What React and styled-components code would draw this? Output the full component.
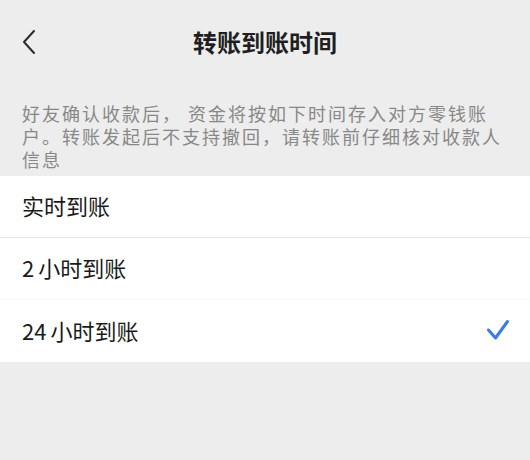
import React, { useState } from 'react';
import styled, { createGlobalStyle } from 'styled-components';

const GlobalStyle = createGlobalStyle`
    html, body {
        margin: 0;
        padding: 0;
        background-color: #ededed;
    }
    body {
        font-family: 'Noto Sans CJK SC', 'Noto Sans', sans-serif;
    }
`;

const Page = styled.div`
    width: 530px;
    min-height: 460px;
    background-color: #ededed;
`;
const Header = styled.div`
    position: relative;
    height: 86px;
    display: flex;
    align-items: center;
    justify-content: center;
    padding-bottom: 2px;
    box-sizing: border-box;
`;
const Back = styled.button`
    position: absolute;
    left: 14px;
    top: 26px;
    width: 30px;
    height: 32px;
    padding: 0;
    border: none;
    background: transparent;
    display: flex;
    align-items: center;
    justify-content: center;
    cursor: pointer;
`;
const Title = styled.h1`
    margin: 0;
    font-size: 24px;
    font-weight: 700;
    color: #1f1f1f;
    line-height: 1;
`;
const Notice = styled.p`
    margin: 0;
    padding: 16px 22px 5px;
    font-size: 18px;
    line-height: 23px;
    letter-spacing: 2px;
    color: #888;
`;
const List = styled.ul`
    margin: 0;
    padding: 0;
    list-style: none;
    background-color: #fff;
`;
const Row = styled.li`
    height: 62px;
    display: flex;
    align-items: center;
    justify-content: space-between;
    padding: 0 20px 3px 22px;
    box-sizing: border-box;
    cursor: pointer;
    border-bottom: 1px solid ${(props) => props.$line || 'transparent'};

    &:last-child {
        border-bottom: none;
    }
`;
const Label = styled.span`
    font-size: 22px;
    color: #1a1a1a;
`;
const Num = styled.span`
    margin-right: 4px;
`;
const Check = styled.svg`
    width: 24px;
    height: 24px;
`;

const options = [
    { num: '', text: '实时到账', line: '#e6e6e6' },
    { num: '2', text: '小时到账', line: '#f8f8f8' },
    { num: '24', text: '小时到账' },
];

const App = () => {
    const [selected, setSelected] = useState(2);
    return (
        <Page>
            <GlobalStyle />
            <Header>
                <Back aria-label="返回">
                    <svg width="16" height="26" viewBox="0 0 16 26">
                        <path
                            d="M13 2 L3 13 L13 24"
                            fill="none"
                            stroke="#2b2b2b"
                            strokeWidth="2"
                            strokeLinecap="round"
                            strokeLinejoin="round"
                        />
                    </svg>
                </Back>
                <Title>转账到账时间</Title>
            </Header>
            <Notice>
                好友确认收款后， 资金将按如下时间存入对方零钱账户。转账发起后不支持撤回，请转账前仔细核对收款人信息
            </Notice>
            <List>
                {options.map((item, i) => (
                    <Row key={i} $line={item.line} onClick={() => setSelected(i)}>
                        <Label>
                            {item.num && <Num>{item.num}</Num>}
                            {item.text}
                        </Label>
                        {selected === i && (
                            <Check viewBox="0 0 24 24">
                                <path
                                    d="M2.5 12 L9.5 20 L21.5 3.5"
                                    fill="none"
                                    stroke="#3a7ce4"
                                    strokeWidth="3"
                                    strokeLinecap="round"
                                    strokeLinejoin="round"
                                />
                            </Check>
                        )}
                    </Row>
                ))}
            </List>
        </Page>
    );
};

export default App;
